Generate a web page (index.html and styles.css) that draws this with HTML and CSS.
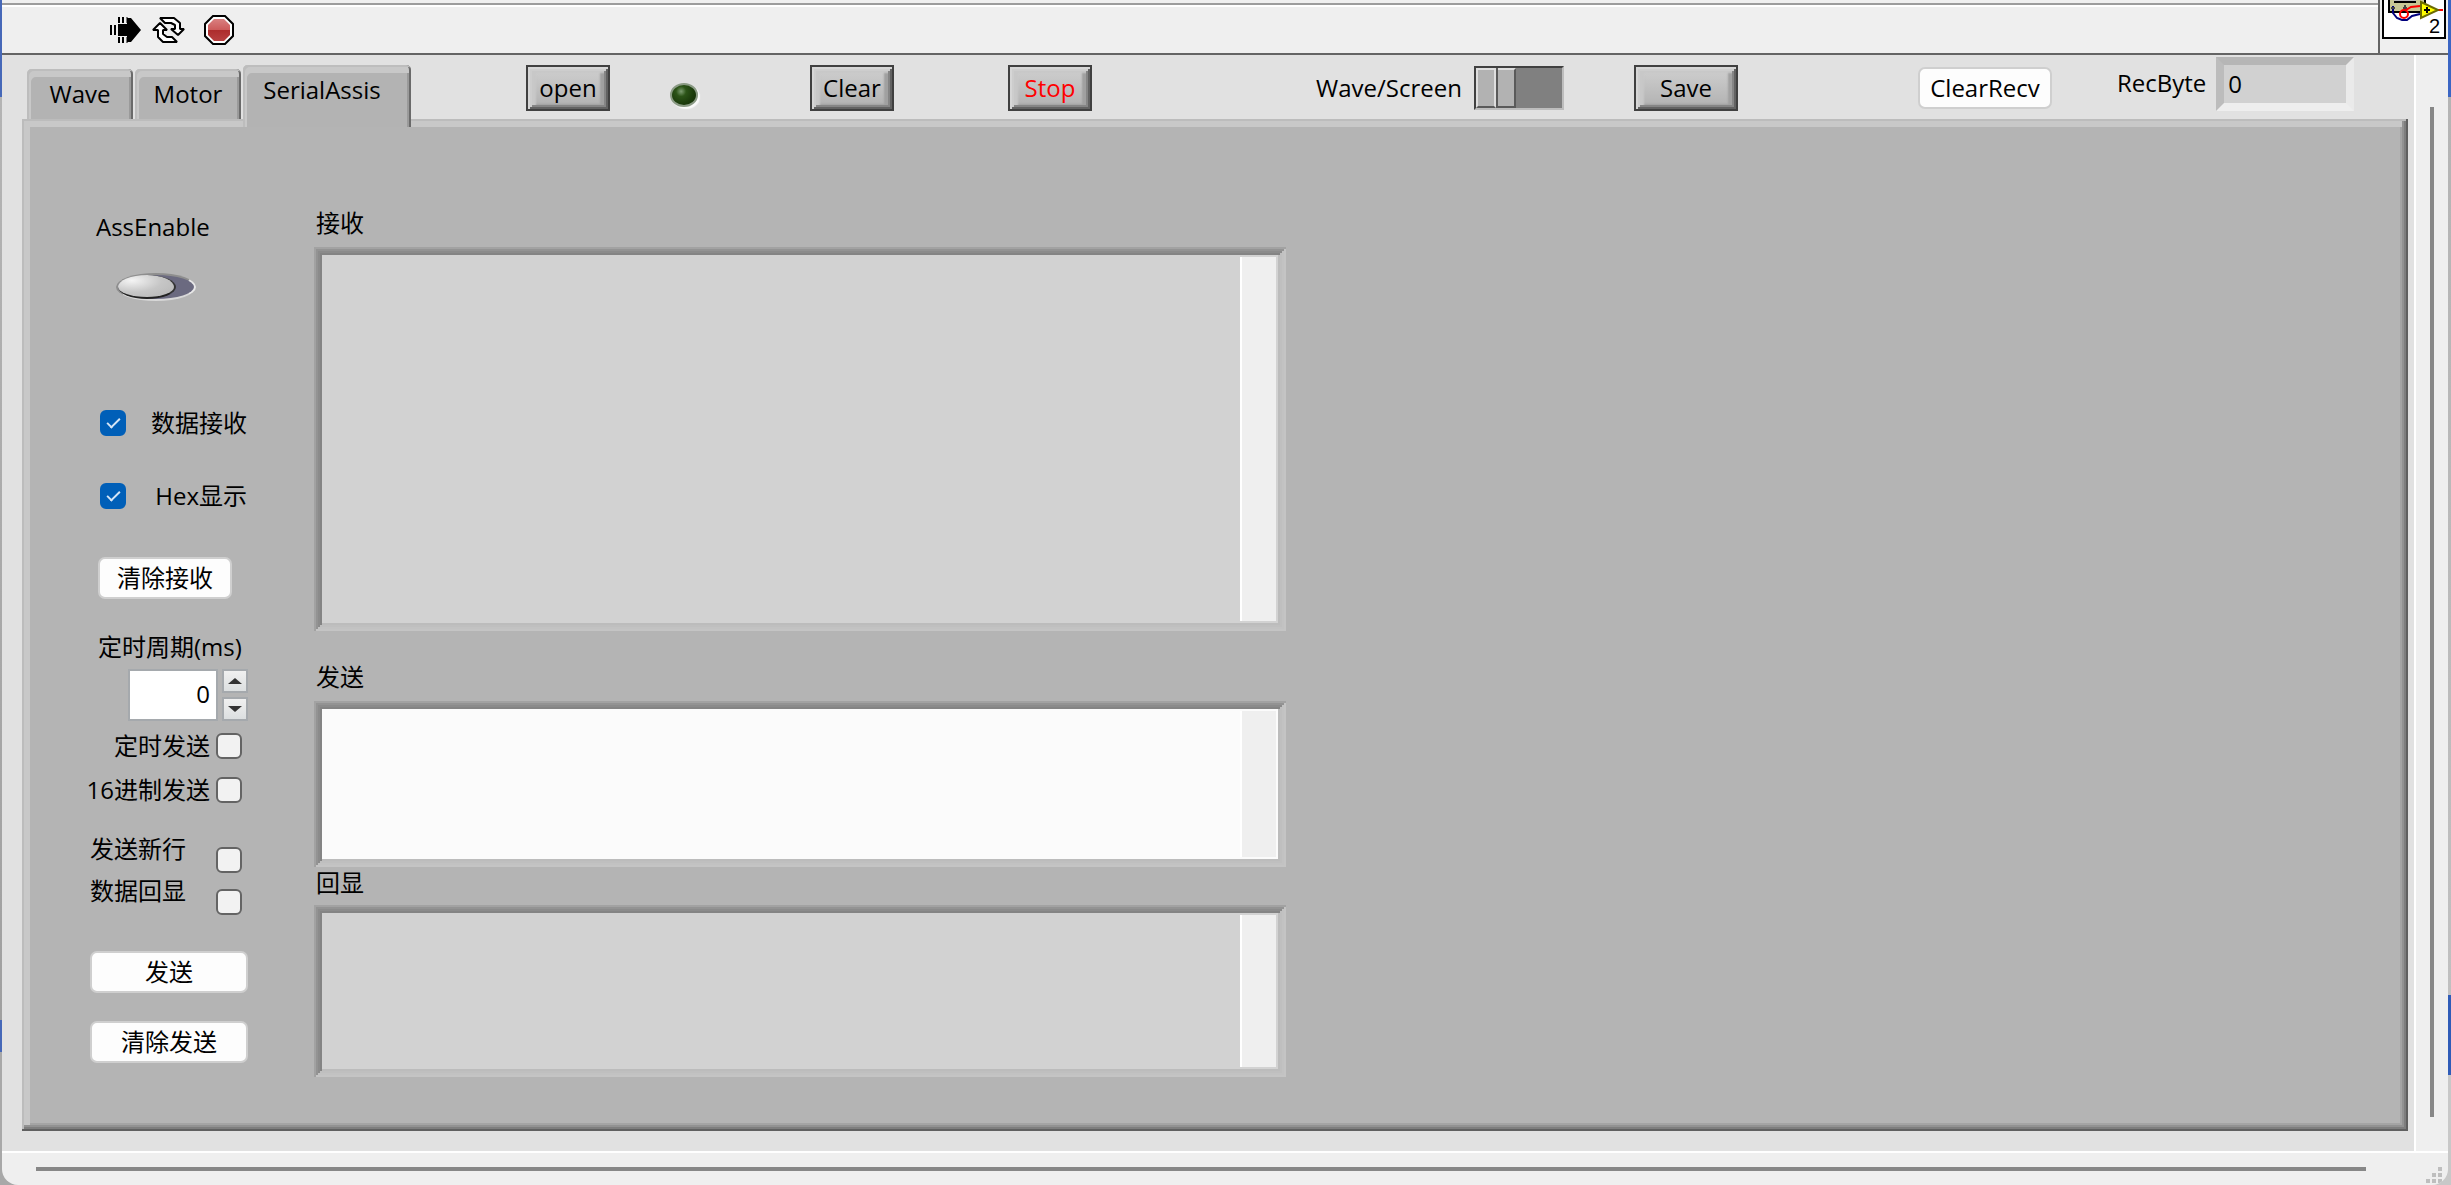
FILE: index.html
```html
<!DOCTYPE html>
<html lang="zh-CN">
<head>
  <meta charset="UTF-8">
  <meta name="viewport" content="width=device-width, initial-scale=1.0">
  <title>SerialAssis</title>
  <link rel="stylesheet" href="styles.css">
</head>
<body>
  <div class="window">
    <header class="header">
      <div class="toolbar">
        <button class="tool" aria-label="Run">
          <svg width="32" height="30" viewBox="0 0 32 30">
            <path d="M8 9h9V3h4l10 12-10 12h-4v-6H8z" fill="#000"/>
            <path d="M1 10v10M5 10v10M9 2v6M13 2v6M9 22v6M13 22v6" stroke="#000" stroke-width="2"/>
            <path d="M17 2v6M17 22v6" stroke="#000" stroke-width="1"/>
          </svg>
        </button>
        <button class="tool" aria-label="Run continuously">
          <svg width="34" height="28" viewBox="0 0 34 28" fill="#fff" stroke="#000" stroke-width="2" stroke-linejoin="bevel">
            <path d="M8 2h14l6 5v6h4l-6 6-7-6h4V9l-4-2h-6z"/>
            <path d="M25 26H11l-5-5v-7H1l7-7 7 7h-4v4l4 3h5z"/>
          </svg>
        </button>
        <button class="tool" aria-label="Abort">
          <svg width="30" height="30" viewBox="0 0 30 30">
            <defs>
              <linearGradient id="abort" x1="0" y1="0" x2="0" y2="1">
                <stop offset="0" stop-color="#d98080"/>
                <stop offset=".5" stop-color="#cc5a5a"/>
                <stop offset=".51" stop-color="#ad2c2c"/>
                <stop offset="1" stop-color="#b84040"/>
              </linearGradient>
            </defs>
            <path d="M9 1h12l8 8v12l-8 8H9l-8-8V9z" fill="#fff" stroke="#000" stroke-width="2"/>
            <path d="M10 4h10l6 6v10l-6 6H10l-6-6V10z" fill="url(#abort)"/>
          </svg>
        </button>
      </div>
      <div class="vi-icon">
        <svg width="64" height="39" viewBox="0 0 64 39">
          <path d="M1 0v38h62V0" fill="#fff" stroke="#000" stroke-width="2"/>
          <path d="M7 0v12h36V0" fill="#c8c896" stroke="#000" stroke-width="2"/>
          <path d="M12 2h22" stroke="#000" stroke-width="2"/>
          <path d="M12 0h22" stroke="#bbb" stroke-width="2"/>
          <path d="M11 6v7l4 5 5 2h5l5-4 8-2" fill="none" stroke="#00007d" stroke-width="2"/>
          <path d="M9 8h4M21 8h4M23 5v6" stroke="#444" stroke-width="2"/>
          <circle cx="22" cy="14" r="4" fill="none" stroke="#f00" stroke-width="2"/>
          <path d="M24 10l5-3 9-1M55 10h6" fill="none" stroke="#f00" stroke-width="2"/>
          <path d="M39 2l17 8-17 8z" fill="#ff0" stroke="#6b6b00" stroke-width="2"/>
          <path d="M45 7v6M42 10h6" stroke="#000" stroke-width="2"/>
          <text x="47" y="33" class="vi-number">2</text>
        </svg>
      </div>
    </header>

    <div class="body">
      <main class="panel">
        <div class="controls">
          <div class="tabs" role="tablist">
            <button class="tab" role="tab">Wave</button>
            <button class="tab" role="tab">Motor</button>
            <button class="tab active" role="tab" aria-selected="true">SerialAssis</button>
          </div>
          <button class="bevel-btn">open</button>
          <span class="led"></span>
          <button class="bevel-btn">Clear</button>
          <button class="bevel-btn stop">Stop</button>
          <label class="slide-label">Wave/Screen
            <input type="checkbox" role="switch" class="slide">
          </label>
          <button class="bevel-btn save">Save</button>
          <button class="flat-btn wide">ClearRecv</button>
          <div class="rec-byte">
            <label for="rec-byte">RecByte</label>
            <input type="text" id="rec-byte" value="0" readonly>
          </div>
        </div>

        <section class="page" role="tabpanel">
          <div class="settings">
            <div class="enable">
              <label for="enable">AssEnable</label>
              <input type="checkbox" role="switch" id="enable" class="oval">
            </div>

            <div class="check-list">
              <div class="check-left">
                <input type="checkbox" id="receive" class="check" checked>
                <label for="receive">数据接收</label>
              </div>
              <div class="check-left">
                <input type="checkbox" id="hex" class="check" checked>
                <label for="hex">Hex显示</label>
              </div>
            </div>

            <button class="flat-btn wide clear-recv">清除接收</button>

            <div class="period">
              <label for="period">定时周期(ms)</label>
              <div class="number">
                <input type="text" id="period" inputmode="numeric" value="0">
                <div class="spin">
                  <button aria-label="Increase"><svg width="14" height="8" viewBox="0 0 14 8"><path d="M0 7l7-6 7 6z" fill="#333"/></svg></button>
                  <button aria-label="Decrease"><svg width="14" height="8" viewBox="0 0 14 8"><path d="M0 1l7 6 7-6z" fill="#333"/></svg></button>
                </div>
              </div>
            </div>

            <div class="send-options">
              <div class="check-right">
                <label for="timed">定时发送</label>
                <input type="checkbox" id="timed" class="check">
              </div>
              <div class="check-right">
                <label for="hex-send">16进制发送</label>
                <input type="checkbox" id="hex-send" class="check">
              </div>
            </div>

            <div class="line-options">
              <div class="check-low">
                <label for="newline">发送新行</label>
                <input type="checkbox" id="newline" class="check">
              </div>
              <div class="check-low">
                <label for="echo">数据回显</label>
                <input type="checkbox" id="echo" class="check">
              </div>
            </div>

            <div class="send-buttons">
              <button class="flat-btn">发送</button>
              <button class="flat-btn">清除发送</button>
            </div>
          </div>

          <div class="texts">
            <label for="recv-text">接收</label>
            <div class="text-box recv">
              <textarea id="recv-text" readonly></textarea>
              <div class="text-scroll"></div>
            </div>
            <label for="send-text">发送</label>
            <div class="text-box send">
              <textarea id="send-text"></textarea>
              <div class="text-scroll"></div>
            </div>
            <label for="echo-text">回显</label>
            <div class="text-box echo">
              <textarea id="echo-text" readonly></textarea>
              <div class="text-scroll"></div>
            </div>
          </div>
        </section>
      </main>
      <div class="v-scroll"><div class="v-bar"></div></div>
    </div>

    <footer class="h-scroll">
      <div class="h-bar"></div>
      <svg class="grip" width="16" height="16" viewBox="0 0 16 16" fill="#bebebe">
        <path d="M12 0h4v4h-4zM6 6h4v4H6zM12 6h4v4h-4zM0 12h4v4H0zM6 12h4v4H6zM12 12h4v4h-4z"/>
      </svg>
    </footer>
  </div>
</body>
</html>
```
FILE: styles.css
```css
*,
*::before,
*::after {
  box-sizing: border-box;
}

body {
  margin: 0;
  font-family: "Open Sans", "Noto Sans CJK SC", sans-serif;
  font-size: 24px;
  line-height: 32px;
  color: #000;
  background:
    linear-gradient(#4668b8 97px, #b4b4b4 97px, #a0a0a0 1020px, #4668b8 1020px, #4668b8 1052px, #a8a8a8 1052px) left / 50% 100% no-repeat,
    linear-gradient(#3b66c4 97px, #b4b4b4 97px, #c0c0c0 995px, #2f5cb8 995px, #2f5cb8 1075px, #c8c8c8 1075px) right / 50% 100% no-repeat;
}

button, input, textarea {
  font: inherit;
  color: inherit;
  margin: 0;
  padding: 0;
}

label {
  white-space: nowrap;
}

.window {
  display: flex;
  flex-direction: column;
  min-height: 100vh;
  margin: 0 3px 0 2px;
  background: #efefef;
  border-radius: 0 0 16px 16px;
  overflow: hidden;
}

/* toolbar */
.header {
  display: flex;
  height: 55px;
  border-bottom: 2px solid #646464;
}

.toolbar {
  display: flex;
  flex: 1;
  align-items: center;
  gap: 10px;
  margin-top: 3px;
  padding: 2px 0 0 108px;
  border-top: 2px solid #9c9c9c;
  box-shadow: inset 0 2px 0 #fff;
}

.tool {
  display: flex;
  border: none;
  background: none;
}

.tool:last-child {
  margin-left: 8px;
}

.vi-icon {
  width: 70px;
  padding-left: 2px;
  border-left: 2px solid #646464;
}

.vi-icon svg {
  display: block;
}

.vi-number {
  font-family: "Liberation Sans", sans-serif;
  font-size: 20px;
}

/* front panel */
.body {
  display: flex;
  flex: 1;
}

.panel {
  display: flex;
  flex: 1;
  flex-direction: column;
  padding: 0 6px 20px 20px;
  background: #e1e1e1;
}

.controls {
  display: grid;
  grid-template-columns: 504fr 144fr 140fr 198fr 308fr 318fr 284fr 199fr 291fr;
  align-items: center;
  justify-items: start;
  height: 64px;
  padding-top: 2px;
}

.tabs {
  display: flex;
  align-self: end;
  align-items: flex-end;
  gap: 2px;
  padding-left: 5px;
}

.tab {
  height: 50px;
  min-width: 106px;
  padding: 0 16px;
  border: none;
  border-radius: 5px 5px 0 0;
  background: #b3b3b3;
  box-shadow: inset 2px 2px 0 #bdbdbd, inset -2px 0 0 #6a6a6a, inset 4px 8px 0 #c8c8c8, inset -4px 0 0 #9a9a9a;
}

.tab.active {
  position: relative;
  height: 62px;
  min-width: 168px;
  margin-bottom: -8px;
  padding: 0 26px 12px 16px;
}

.bevel-btn {
  height: 46px;
  min-width: 84px;
  border: 2px solid #404040;
  background: linear-gradient(#d0d0d0, #b0b0b0);
  box-shadow:
    inset 2px 2px 0 #d6d6d6, inset -2px -2px 0 #626262,
    inset 4px 4px 0 #cdcdcd, inset -4px -4px 0 #858585,
    inset 8px 6px 2px #c8c8c8, inset -8px -5px 2px #a0a0a0;
}

.stop {
  color: #f00;
}

.save {
  min-width: 104px;
}

.led {
  align-self: end;
  width: 28px;
  height: 24px;
  margin-bottom: 12px;
  border: 2px solid #8a9a84;
  border-radius: 50%;
  background: radial-gradient(circle at 38% 32%, #7c9c70 0, #2c5418 25%, #1c3c0c 60%, #122a06 100%);
  box-shadow: 2px 2px 1px #fafafa;
}

.slide-label {
  display: flex;
  align-items: center;
  gap: 12px;
}

.slide {
  appearance: none;
  display: flex;
  width: 90px;
  height: 44px;
  border: 2px solid;
  border-color: #404040 #bdbdbd #bdbdbd #404040;
  background: #808080;
}

.slide::before,
.slide::after {
  content: "";
  width: 20px;
  height: 40px;
  border: 2px solid;
  border-color: #dedede #dedede #5a5a5a #dedede;
  background: #b2b2b2;
}

.slide::before {
  box-shadow: 2px 0 0 #5a5a5a;
}

.slide::after {
  width: 18px;
  margin-left: 2px;
  border-right-color: #5a5a5a;
  border-left: none;
}

.flat-btn {
  height: 42px;
  padding: 0 6px;
  border: 2px solid #cfcfcf;
  border-radius: 7px;
  background: #fdfdfd;
}

.wide {
  min-width: 134px;
}

.rec-byte {
  display: flex;
  align-self: start;
  align-items: center;
  gap: 10px;
}

.rec-byte label {
  padding-bottom: 2px;
}

.rec-byte input {
  width: 138px;
  height: 54px;
  padding: 0 4px 2px;
  border: 8px solid;
  border-color: #b6b6b6 #eaeaea #eeeeee #bcbcbc;
  background: #d1d1d1;
}

/* tab page */
.page {
  display: flex;
  flex: 1;
  padding: 8px;
  background: #b4b4b4;
  box-shadow:
    inset -2px -2px 0 #606060, inset 2px 2px 0 #bcbcbc,
    inset -4px -4px 0 #7e7e7e, inset -6px -6px 0 #929292,
    inset 8px 8px 0 #c8c8c8, inset -8px -8px 0 #a4a4a4;
}

.settings {
  width: 284px;
  padding: 84px 0 0 60px;
}

.enable {
  display: flex;
  flex-direction: column;
  gap: 30px;
  padding-left: 6px;
}

.oval {
  appearance: none;
  width: 80px;
  height: 28px;
  margin-left: 20px;
  border: 2px solid;
  border-color: #8e8e8e #e8e8e8 #d8d8d8 #8e8e8e;
  border-radius: 50%;
  background: #6b6a80;
}

.oval::before {
  content: "";
  display: block;
  width: 58px;
  height: 24px;
  border-bottom: 2px solid #222;
  border-right: 2px solid #333;
  border-radius: 50%;
  background: radial-gradient(ellipse at 25% 25%, #f4f4f4, #c6c6c6 50%, #b4b4b4);
}

.check {
  appearance: none;
  width: 26px;
  height: 26px;
  border: 2px solid #646464;
  border-radius: 6px;
  background: #f2f2f2;
}

.check:checked {
  border-color: #005fb8;
  background: #005fb8;
}

.check:checked::before {
  content: "";
  display: block;
  width: 13px;
  height: 7px;
  margin: 6px 0 0 5px;
  border-left: 2px solid #d6e6f6;
  border-bottom: 2px solid #d6e6f6;
  transform: rotate(-45deg);
}

.check-list {
  display: flex;
  flex-direction: column;
  gap: 41px;
  width: 157px;
  margin-top: 106px;
  padding-left: 10px;
}

.check-left {
  display: flex;
  align-items: center;
  justify-content: space-between;
}

.clear-recv {
  margin: 45px 0 0 8px;
}

.period {
  margin-top: 32px;
  padding-left: 8px;
}

.period label {
  display: block;
}

.number {
  display: flex;
  gap: 4px;
  margin: 6px 0 0 30px;
}

.number input {
  width: 90px;
  height: 52px;
  padding: 0 6px 4px 0;
  border: 2px solid #a5a9ad;
  background: #fff;
  text-align: right;
}

.spin {
  display: flex;
  flex-direction: column;
  gap: 4px;
}

.spin button {
  display: flex;
  align-items: center;
  justify-content: center;
  width: 26px;
  height: 24px;
  border: 2px solid #a5a9ad;
  background: linear-gradient(#f0f0f0, #dcdfe0);
}

.send-options {
  display: flex;
  flex-direction: column;
  gap: 12px;
  width: 152px;
  margin-top: 9px;
}

.check-right {
  display: flex;
  align-items: center;
  justify-content: flex-end;
  gap: 6px;
  margin-left: -10px;
}

.line-options {
  display: flex;
  flex-direction: column;
  gap: 2px;
  width: 152px;
  margin-top: 27px;
}

.check-low {
  display: flex;
  justify-content: space-between;
  height: 40px;
}

.check-low .check {
  align-self: flex-end;
}

.send-buttons {
  display: flex;
  flex-direction: column;
  gap: 28px;
  width: 158px;
  margin-top: 36px;
}

.texts {
  flex: 1;
  max-width: 972px;
  padding-top: 80px;
}

.texts label {
  display: block;
  padding-left: 2px;
}

.text-box {
  display: flex;
  margin: 8px 0 30px;
  padding: 8px;
  background: #d2d2d2;
  box-shadow:
    inset 2px 2px 0 #a2a2a2, inset -2px -2px 0 #c4c4c4,
    inset 4px 4px 0 #939393, inset -4px -4px 0 #c2c2c2,
    inset 6px 6px 0 #8b8b8b, inset -6px -6px 0 #bfbfbf,
    inset 8px 8px 0 #848484, inset -8px -8px 0 #bcbcbc;
}

.text-box textarea {
  flex: 1;
  padding: 2px 4px;
  border: none;
  background: transparent;
  resize: none;
}

.text-scroll {
  width: 36px;
  margin: 2px;
  border-left: 2px solid #fff;
  background: #efefef;
}

.recv {
  height: 384px;
}

.send {
  height: 166px;
  margin-bottom: 0;
  background: #fbfbfb;
}

.echo {
  height: 172px;
  margin: 6px 0 0;
}

/* window scrollbars */
.v-scroll {
  width: 34px;
  padding: 52px 0 34px 14px;
  border-left: 2px solid #fff;
}

.v-bar {
  width: 4px;
  height: 100%;
  background: #878787;
}

.h-scroll {
  display: flex;
  align-items: center;
  justify-content: space-between;
  height: 34px;
  padding: 0 6px 0 34px;
  border-top: 2px solid #fff;
}

.h-bar {
  flex: 1;
  height: 4px;
  margin-right: 60px;
  background: #878787;
}

.grip {
  margin-top: 12px;
}
```
